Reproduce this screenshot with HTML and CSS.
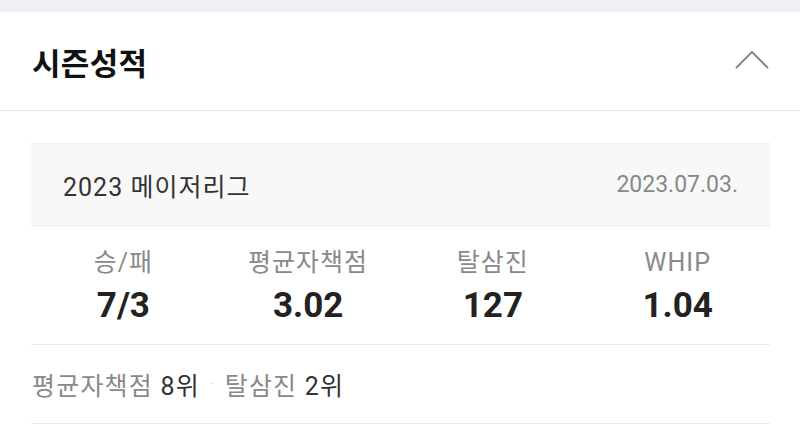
FILE: index.html
```html
<!DOCTYPE html>
<html lang="ko">
<head>
  <meta charset="UTF-8" />
  <meta name="viewport" content="width=device-width, initial-scale=1.0"/>
  <title>시즌성적</title>
  <link rel="stylesheet" href="styles.css">
</head>
<body>
  <div class="top-band"></div>

  <section class="season">
    <div class="season-head">
      <h2>시즌성적</h2>
      <svg class="chevron" width="34" height="20" viewBox="0 0 34 20">
        <polyline points="1,19 17,3 33,19" fill="none" stroke="#8a8a8a" stroke-width="2"/>
      </svg>
    </div>

    <div class="season-body">
      <div class="card">
        <div class="card-head">
          <span class="league">2023 메이저리그</span>
          <span class="date">2023.07.03.</span>
        </div>
        <ul class="stats">
          <li><span class="label">승/패</span><strong>7/3</strong></li>
          <li><span class="label">평균자책점</span><strong>3.02</strong></li>
          <li><span class="label">탈삼진</span><strong>127</strong></li>
          <li><span class="label">WHIP</span><strong>1.04</strong></li>
        </ul>
      </div>
      <div class="rank">
        <span class="rank-item">평균자책점 <em>8위</em></span>
        <span class="dot">·</span>
        <span class="rank-item">탈삼진 <em>2위</em></span>
      </div>
    </div>
  </section>
</body>
</html>
```
FILE: styles.css
```css
body {
  margin: 0;
  background: #fff;
  font-family: Roboto, "Noto Sans CJK KR", sans-serif;
  color: #222;
}

.top-band {
  height: 12px;
  background: #eff1f6;
}

.season-head {
  display: flex;
  align-items: center;
  justify-content: space-between;
  height: 98px;
  padding: 0 31px 0 32px;
  border-bottom: 1px solid #e8e8e8;
}

.season-head h2 {
  margin: 0;
  font-family: "Noto Sans CJK KR", sans-serif;
  font-size: 31px;
  font-weight: 700;
  color: #111;
  letter-spacing: 0.3px;
}

.chevron {
  display: block;
  margin-top: -4px;
}

.season-body {
  padding: 32px 30px 0 31px;
}

.card-head {
  display: flex;
  align-items: center;
  justify-content: space-between;
  height: 81px;
  padding: 0 32px;
  background: #f8f8f8;
  border-top: 1px solid #efefef;
  border-bottom: 1px solid #ececec;
}

.league {
  font-size: 25px;
  letter-spacing: 1px;
  color: #333;
}

.date {
  font-size: 23px;
  color: #888;
}

.stats {
  display: grid;
  grid-template-columns: repeat(4, 1fr);
  margin: 0;
  padding: 0;
  list-style: none;
  height: 118px;
  border-bottom: 1px solid #ececec;
}

.stats li {
  display: flex;
  flex-direction: column;
  align-items: center;
  padding-top: 22px;
}

.stats .label {
  font-size: 25px;
  line-height: 30px;
  letter-spacing: 1px;
  color: #8a8a8a;
}

.stats strong {
  margin-top: 8px;
  font-size: 35px;
  line-height: 40px;
  font-weight: 700;
  color: #222;
}

.rank {
  display: flex;
  align-items: center;
  height: 78px;
  padding-left: 1px;
  border-bottom: 1px solid #ececec;
  font-size: 25px;
  letter-spacing: 1.2px;
  color: #8a8a8a;
}

.rank em {
  font-style: normal;
  color: #333;
}

.dot {
  margin: 0 10px;
  font-size: 14px;
  color: #ccc;
}
```
